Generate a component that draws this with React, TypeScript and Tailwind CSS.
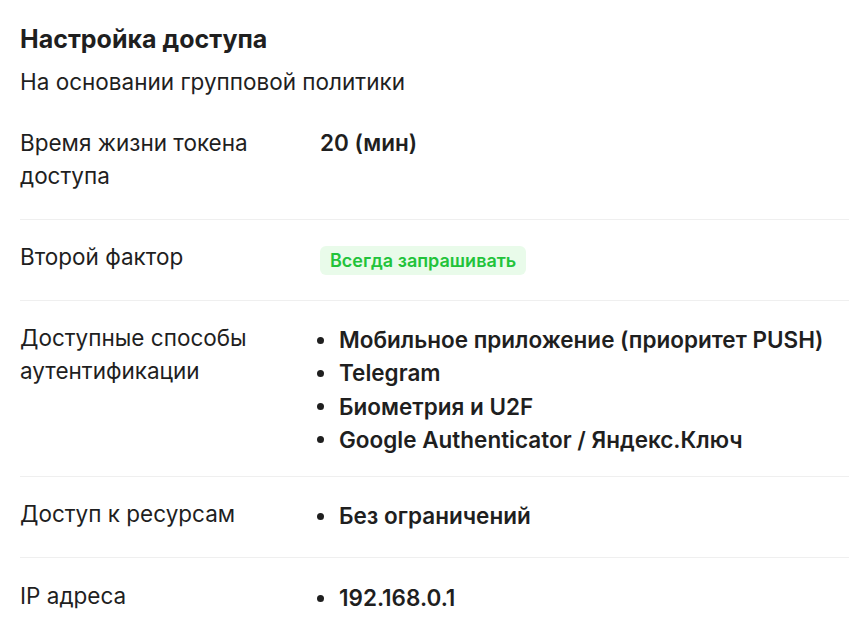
import React from "react";

function Bullets({ items }: { items: string[] }) {
  return (
    <ul className="mt-[2px] flex flex-col">
      {items.map((t) => (
        <li key={t} className="flex items-start font-semibold leading-[33.3px]">
          <span className="ml-[-3px] mr-[15px] flex h-[33px] shrink-0 items-center pt-[1px]">
            <span className="block h-[7px] w-[7px] rounded-full bg-[#1f1f1f]" />
          </span>
          <span>{t}</span>
        </li>
      ))}
    </ul>
  );
}

export default function App() {
  return (
    <div
      className="min-h-screen bg-white pl-5 text-[#1f1f1f]"
      style={{ fontFamily: "Inter, 'Noto Sans', sans-serif" }}
    >
      <h1 className="pt-[23px] text-[25px] font-bold leading-[32px]">Настройка доступа</h1>
      <p className="mt-[11px] text-[22.5px] leading-[32px]">На основании групповой политики</p>

      <div className="mt-[8px] text-[22.5px] leading-[33px]">
        <div className="flex border-b border-[#efefef] pb-[27px] pt-[20px]">
          <div className="w-[300px] shrink-0 pr-4">Время жизни токена доступа</div>
          <div className="font-semibold">20 (мин)</div>
        </div>
        <div className="flex items-start border-b border-[#efefef] pb-[25px] pt-[20px]">
          <div className="w-[300px] shrink-0 pr-4">Второй фактор</div>
          <div className="pt-[6px]">
            <span className="block rounded-md bg-[#e9fbea] px-[10px] py-[2px] text-[18px] font-semibold leading-[25px] text-[#22c33a]">
              Всегда запрашивать
            </span>
          </div>
        </div>
        <div className="flex border-b border-[#efefef] pb-[20px] pt-[20px]">
          <div className="w-[300px] shrink-0 pr-4">Доступные способы аутентификации</div>
          <Bullets
            items={[
              "Мобильное приложение (приоритет PUSH)",
              "Telegram",
              "Биометрия и U2F",
              "Google Authenticator / Яндекс.Ключ",
            ]}
          />
        </div>
        <div className="flex border-b border-[#efefef] pb-[25px] pt-[20px]">
          <div className="w-[300px] shrink-0 pr-4">Доступ к ресурсам</div>
          <Bullets items={["Без ограничений"]} />
        </div>
        <div className="flex pb-[24px] pt-[21px]">
          <div className="w-[300px] shrink-0 pr-4">IP адреса</div>
          <Bullets items={["192.168.0.1"]} />
        </div>
      </div>
    </div>
  );
}
